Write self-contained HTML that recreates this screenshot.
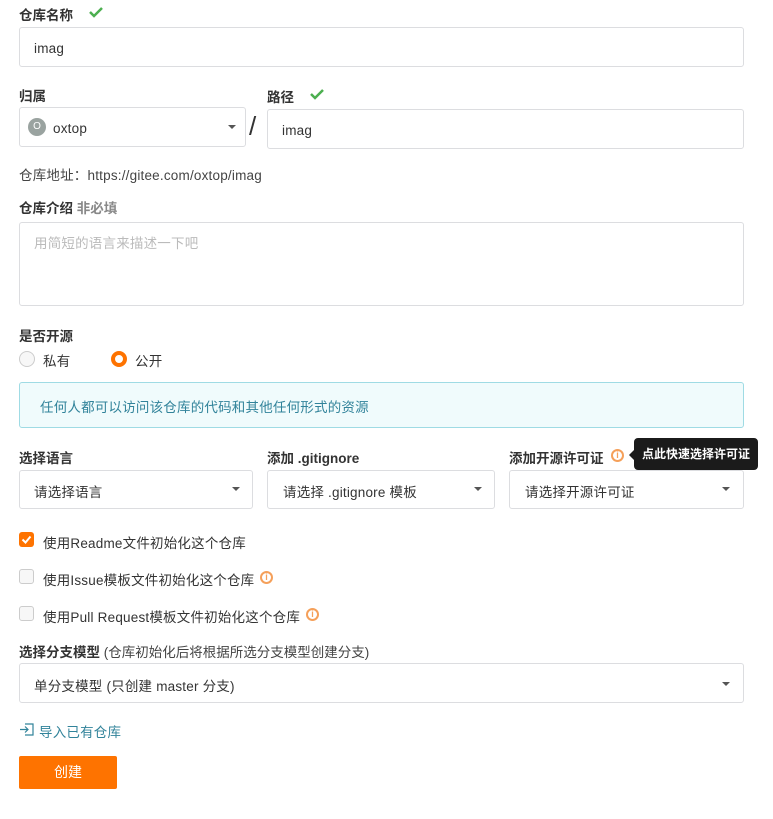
<!DOCTYPE html>
<html><head><meta charset="utf-8"><style>
body{margin:0;width:773px;height:819px;background:#fff;font-family:"Liberation Sans","Noto Sans CJK SC",sans-serif;font-size:14px;color:#333;position:relative;overflow:hidden}
.a{position:absolute;line-height:1.2}
.lb{font-weight:bold;color:#333;font-size:13.5px;margin-top:4px}
.box{position:absolute;border:1px solid #dcdde0;border-radius:3px;box-sizing:border-box;background:#fff}
.tx{position:absolute;font-size:13.5px;color:#333;line-height:1.2;letter-spacing:0.2px;margin-top:4px}
.car{position:absolute;width:0;height:0;border-left:4px solid transparent;border-right:4px solid transparent;border-top:4px solid #555}
.cb{position:absolute;width:15px;height:15px;border:1px solid #ccc;border-radius:3px;box-sizing:border-box;background:#f7f7f7}
.info{position:absolute;width:13px;height:13px;border:2px solid #f5a05a;border-radius:50%;box-sizing:border-box;color:#f5a05a;font-size:9px;font-weight:bold;text-align:center;line-height:9px}
</style></head><body>
<div class="a lb" style="left:19px;top:4px">仓库名称</div>
<svg class="a" style="left:89px;top:6px" width="14" height="12"><path d="M1 6l4 4 8-8" stroke="#4caf50" stroke-width="2.5" fill="none"/></svg>
<div class="box" style="left:19px;top:27px;width:725px;height:40px"></div>
<div class="tx" style="left:34px;top:37px">imag</div>

<div class="a lb" style="left:19px;top:85px">归属</div>
<div class="box" style="left:19px;top:107px;width:227px;height:40px"></div>
<div class="a" style="left:28px;top:118px;width:18px;height:18px;border-radius:50%;background:#9aa3a0;color:#fff;font-size:10px;text-align:center;line-height:18px">O</div>
<div class="tx" style="left:53px;top:117px">oxtop</div>
<div class="car" style="left:228px;top:125px"></div>
<div class="a" style="left:249px;top:111px;font-size:26px;color:#333">/</div>
<div class="a lb" style="left:267px;top:86px">路径</div>
<svg class="a" style="left:310px;top:88px" width="14" height="12"><path d="M1 6l4 4 8-8" stroke="#4caf50" stroke-width="2.5" fill="none"/></svg>
<div class="box" style="left:267px;top:109px;width:477px;height:40px"></div>
<div class="tx" style="left:282px;top:119px">imag</div>

<div class="tx" style="left:19px;top:164px;color:#444">仓库地址：https://gitee.com/oxtop/imag</div>
<div class="a lb" style="left:19px;top:197px">仓库介绍 <span style="color:#888">非必填</span></div>
<div class="box" style="left:19px;top:222px;width:725px;height:84px"></div>
<div class="tx" style="left:34px;top:232px;color:#bbb">用简短的语言来描述一下吧</div>

<div class="a lb" style="left:19px;top:325px">是否开源</div>
<div class="a" style="left:19px;top:351px;width:16px;height:16px;border:1px solid #ccc;border-radius:50%;box-sizing:border-box;background:#f7f7f7"></div>
<div class="tx" style="left:43px;top:350px">私有</div>
<div class="a" style="left:111px;top:351px;width:16px;height:16px;border:4.5px solid #fe7300;border-radius:50%;box-sizing:border-box;background:#fff"></div>
<div class="tx" style="left:135px;top:350px">公开</div>

<div class="a" style="left:19px;top:382px;width:725px;height:46px;border:1px solid #9fdbe4;background:#f0fbfc;border-radius:3px;box-sizing:border-box"></div>
<div class="tx" style="left:40px;top:396px;color:#31839a">任何人都可以访问该仓库的代码和其他任何形式的资源</div>

<div class="a lb" style="left:19px;top:447px">选择语言</div>
<div class="a lb" style="left:267px;top:447px">添加 .gitignore</div>
<div class="a lb" style="left:509px;top:447px">添加开源许可证</div>
<div class="info" style="left:611px;top:449px">i</div>
<div class="a" style="left:629px;top:450px;width:0;height:0;border-top:5px solid transparent;border-bottom:5px solid transparent;border-right:5px solid #1b1b1b"></div>
<div class="a" style="left:634px;top:438px;width:124px;height:32px;background:#1b1b1b;border-radius:4px;color:#fff;font-size:12px;line-height:32px;text-align:center;font-weight:bold">点此快速选择许可证</div>
<div class="box" style="left:19px;top:470px;width:234px;height:39px"></div>
<div class="tx" style="left:34px;top:481px">请选择语言</div>
<div class="car" style="left:232px;top:487px"></div>
<div class="box" style="left:267px;top:470px;width:228px;height:39px"></div>
<div class="tx" style="left:283px;top:481px">请选择 .gitignore 模板</div>
<div class="car" style="left:474px;top:487px"></div>
<div class="box" style="left:509px;top:470px;width:235px;height:39px"></div>
<div class="tx" style="left:525px;top:481px">请选择开源许可证</div>
<div class="car" style="left:722px;top:487px"></div>

<div class="a" style="left:19px;top:532px;width:15px;height:15px;background:#fe7300;border-radius:3px"></div>
<svg class="a" style="left:21px;top:534px" width="11" height="11"><path d="M1.5 5.5l3 3 5-6" stroke="#fff" stroke-width="2" fill="none"/></svg>
<div class="tx" style="left:43px;top:532px">使用Readme文件初始化这个仓库</div>
<div class="cb" style="left:19px;top:569px"></div>
<div class="tx" style="left:43px;top:569px">使用Issue模板文件初始化这个仓库</div>
<div class="info" style="left:260px;top:571px">i</div>
<div class="cb" style="left:19px;top:606px"></div>
<div class="tx" style="left:43px;top:606px">使用Pull Request模板文件初始化这个仓库</div>
<div class="info" style="left:306px;top:608px">i</div>

<div class="a" style="left:19px;top:645px;font-size:13.5px"><b>选择分支模型</b> <span style="color:#444">(仓库初始化后将根据所选分支模型创建分支)</span></div>
<div class="box" style="left:19px;top:663px;width:725px;height:40px"></div>
<div class="tx" style="left:34px;top:675px">单分支模型 (只创建 master 分支)</div>
<div class="car" style="left:722px;top:682px"></div>

<svg class="a" style="left:19px;top:722px" width="16" height="15"><path d="M6 2h8v11H6M1 7.5h8M6 4.5l3 3-3 3" stroke="#31839a" stroke-width="1.2" fill="none"/></svg>
<div class="tx" style="left:39px;top:721px;color:#31839a">导入已有仓库</div>
<div class="a" style="left:19px;top:756px;width:98px;height:33px;background:#fe7300;border-radius:2px;color:#fff;font-size:14px;text-align:center;line-height:33px">创建</div>
</body></html>
